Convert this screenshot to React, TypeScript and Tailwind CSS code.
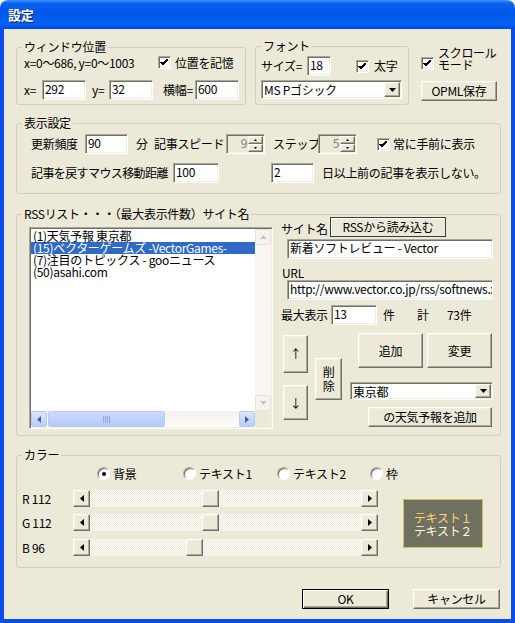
import React from 'react';

const font = { fontFamily: '"Noto Sans CJK JP", "Liberation Sans", sans-serif' };

const sunken =
  'border border-t-[#aca899] border-l-[#aca899] border-r-white border-b-white shadow-[inset_1px_1px_0_#716f64,inset_-1px_-1px_0_#f1efe2]';
const raised =
  'border border-t-white border-l-white border-r-[#716f64] border-b-[#716f64] shadow-[inset_-1px_-1px_0_#aca899,inset_1px_1px_0_#f1efe2] bg-[#ece9d8]';

const Field: React.FC<{ w: string; value: string }> = ({ w, value }) => (
  <div className={`h-[20px] ${w} ${sunken} bg-white pl-[2px] text-[12px] leading-[15px] text-black overflow-hidden whitespace-nowrap shrink-0`}>
    {value}
  </div>
);

const Check: React.FC<{ className?: string }> = ({ className = '' }) => (
  <div className={`w-[13px] h-[13px] bg-white ${sunken} flex items-center justify-center shrink-0 ${className}`}>
    <svg width="9" height="9" viewBox="0 0 9 9" shapeRendering="crispEdges">
      <polyline points="1,4 3,6.5 7.5,1.5" fill="none" stroke="#000" strokeWidth="2" />
    </svg>
  </div>
);

const Radio: React.FC<{ on?: boolean }> = ({ on }) => (
  <div className="w-[13px] h-[13px] rounded-full bg-white border border-t-[#aca899] border-l-[#aca899] border-r-white border-b-white shadow-[inset_1px_1px_0_#716f64] flex items-center justify-center shrink-0">
    {on && <div className="w-[4px] h-[4px] rounded-full bg-black" />}
  </div>
);

const Btn: React.FC<{ className: string; children: React.ReactNode }> = ({ className, children }) => (
  <div className={`${raised} flex items-center justify-center text-[12px] leading-[14px] text-black shrink-0 ${className}`}>
    {children}
  </div>
);

const Tri: React.FC<{ dir: 'up' | 'down' | 'left' | 'right'; color?: string; size?: number }> = ({ dir, color = '#000', size = 4 }) => {
  const s = size;
  const pts =
    dir === 'down'
      ? `0,0 ${s * 2 - 1},0 ${s - 0.5},${s}`
      : dir === 'up'
      ? `0,${s} ${s * 2 - 1},${s} ${s - 0.5},0`
      : dir === 'left'
      ? `${s},0 ${s},${s * 2 - 1} 0,${s - 0.5}`
      : `0,0 0,${s * 2 - 1} ${s},${s - 0.5}`;
  const w = dir === 'up' || dir === 'down' ? s * 2 - 1 : s;
  const h = dir === 'up' || dir === 'down' ? s : s * 2 - 1;
  return (
    <svg width={w} height={h} viewBox={`0 0 ${w} ${h}`}>
      <polygon points={pts} fill={color} />
    </svg>
  );
};

const Combo: React.FC<{ w: string; h: string; value: string }> = ({ w, h, value }) => (
  <div className={`${w} ${h} ${sunken} bg-white flex items-stretch shrink-0`}>
    <div className="flex-1 pl-[2px] text-[12px] leading-[15px] pt-[1px] text-black whitespace-nowrap">{value}</div>
    <div className={`w-[16px] m-[1px] ${raised} flex items-center justify-center`}>
      <Tri dir="down" />
    </div>
  </div>
);

const Spin: React.FC<{ value: string }> = ({ value }) => (
  <div className={`w-[39px] h-[20px] ${sunken} bg-[#ece9d8] flex items-stretch shrink-0`}>
    <div className="flex-1 text-right pr-[1px] text-[12px] leading-[16px] text-[#808080]">{value}</div>
    <div className="w-[15px] flex flex-col my-[1px] mr-[1px]">
      <div className={`flex-1 ${raised} flex items-center justify-center`}>
        <Tri dir="up" size={2} />
      </div>
      <div className={`flex-1 ${raised} flex items-center justify-center`}>
        <Tri dir="down" size={2} />
      </div>
    </div>
  </div>
);

const Group: React.FC<{ label: string; className: string; children: React.ReactNode }> = ({ label, className, children }) => (
  <fieldset className={`border border-[#d0d0bf] rounded-[3px] shrink-0 ${className}`}>
    <legend className="ml-[5px] px-[2px] text-[12px] leading-[14px] text-black">{label}</legend>
    {children}
  </fieldset>
);

const ColorBar: React.FC<{ label: string; value: number }> = ({ label, value }) => (
  <div className="flex items-center h-[17px]">
    <div className="w-[51px] text-[12px] leading-[14px]">{label}</div>
    <div className="w-[305px] h-[17px] flex">
      <div className={`w-[17px] h-[17px] ${raised} flex items-center justify-center`}>
        <Tri dir="left" />
      </div>
      <div className="flex-1 flex bg-[repeating-conic-gradient(#ffffff_0_25%,#ece9d8_0_50%)] bg-[length:2px_2px]">
        <div style={{ width: value }} />
        <div className={`w-[17px] h-[17px] ${raised}`} />
      </div>
      <div className={`w-[17px] h-[17px] ${raised} flex items-center justify-center`}>
        <Tri dir="right" />
      </div>
    </div>
  </div>
);

const items = ['(1)天気予報 東京都', '(15)ベクターゲームズ -VectorGames-', '(7)注目のトピックス - gooニュース', '(50)asahi.com'];

export default function App() {
  return (
    <div className="w-[515px] h-[623px] flex flex-col text-black tracking-[-0.3px]" style={font}>
      <div className="h-[29px] rounded-t-[8px] bg-[linear-gradient(to_bottom,#3d95ff_0%,#0a62f0_12%,#0058e8_45%,#0660f2_85%,#0048d8_100%)] flex items-center pl-[8px] shrink-0">
        <span className="text-white font-bold text-[13px] [text-shadow:1px_1px_0_#0a1e6e]">設定</span>
      </div>
      <div className="flex-1 border-x-[4px] border-b-[4px] border-[#0a4fe2] bg-[#ece9d8] flex flex-col pl-[12px] pt-[10px]">
        {/* top row */}
        <div className="flex items-start">
          <Group label="ウィンドウ位置" className="w-[230px] h-[65px] mt-[1px]">
            <div className="flex items-center h-[15px] mt-[1px] pl-[7px] text-[12px]">
              <span className="w-[134px] shrink-0 leading-[14px]">x=0〜686, y=0〜1003</span>
              <Check />
              <span className="ml-[4px] leading-[14px]">位置を記憶</span>
            </div>
            <div className="flex items-center h-[20px] mt-[10px] pl-[7px] text-[12px]">
              <span className="w-[18px] shrink-0">x=</span>
              <Field w="w-[44px]" value="292" />
              <span className="ml-[6px] w-[17px] shrink-0">y=</span>
              <Field w="w-[44px]" value="32" />
              <span className="ml-[10px] w-[32px] shrink-0">横幅=</span>
              <Field w="w-[44px]" value="600" />
            </div>
          </Group>
          <Group label="フォント" className="w-[154px] h-[66px] ml-[9px]">
            <div className="flex items-center h-[20px] mt-[3px] pl-[5px] text-[12px]">
              <span className="w-[46px] shrink-0">サイズ=</span>
              <Field w="w-[24px]" value="18" />
              <Check className="ml-[25px]" />
              <span className="ml-[5px]">太字</span>
            </div>
            <div className="mt-[4px] pl-[5px]">
              <Combo w="w-[141px]" h="h-[19px]" value="MS Pゴシック" />
            </div>
          </Group>
          <div className="ml-[12px] w-[77px] flex flex-col">
            <div className="flex items-start mt-[8px]">
              <Check className="mt-[10px]" />
              <div className="ml-[4px] text-[12px] leading-[12px]">
                スクロール
                <br />
                モード
              </div>
            </div>
            <Btn className="w-[76px] h-[20px] mt-[10px]">OPML保存</Btn>
          </div>
        </div>

        {/* 表示設定 */}
        <Group label="表示設定" className="w-[485px] h-[78px] mt-[11px]">
          <div className="flex items-center h-[20px] mt-[4px] pl-[14px] text-[12px] whitespace-nowrap">
            <span className="w-[54px] shrink-0">更新頻度</span>
            <Field w="w-[43px]" value="90" />
            <span className="ml-[8px] w-[18px] shrink-0">分</span>
            <span className="w-[72px] shrink-0">記事スピード</span>
            <Spin value="9" />
            <span className="ml-[8px] w-[45px] shrink-0">ステップ</span>
            <Spin value="5" />
            <Check className="ml-[20px]" />
            <span className="ml-[3px]">常に手前に表示</span>
          </div>
          <div className="flex items-center h-[20px] mt-[9px] pl-[14px] text-[12px] whitespace-nowrap">
            <span className="w-[142px] shrink-0 tracking-[-0.6px]">記事を戻すマウス移動距離</span>
            <Field w="w-[46px]" value="100" />
            <div className="w-[52px] shrink-0" />
            <Field w="w-[43px]" value="2" />
            <span className="ml-[8px]">日以上前の記事を表示しない。</span>
          </div>
        </Group>

        {/* RSS list */}
        <Group label="RSSリスト・・・（最大表示件数）サイト名" className="w-[485px] h-[229px] mt-[13px]">
          <div className="flex items-start">
            <div className={`ml-[12px] mt-[6px] w-[244px] h-[202px] ${sunken} bg-white flex flex-col p-[1px]`}>
              <div className="flex-1 flex">
                <div className="flex-1 text-[12px] leading-[12px] whitespace-nowrap overflow-hidden pt-[1px]">
                  {items.map((it, i) => (
                    <div key={it} className={`pl-[2px] h-[12px] ${i === 1 ? 'bg-[#316ac5] text-white' : ''}`}>
                      {it}
                    </div>
                  ))}
                </div>
                <div className="w-[16px] bg-[#f7f6f1] flex flex-col justify-between">
                  <div className="h-[16px] rounded-[2px] border border-[#e3e2dc] bg-[#f4f3ee] flex items-center justify-center">
                    <Tri dir="up" color="#c9c7ba" size={4} />
                  </div>
                  <div className="h-[16px] rounded-[2px] border border-[#e3e2dc] bg-[#f4f3ee] flex items-center justify-center">
                    <Tri dir="down" color="#c9c7ba" size={4} />
                  </div>
                </div>
              </div>
              <div className="h-[16px] flex">
                <div className="flex-1 flex bg-[linear-gradient(to_bottom,#f3f1ec,#fefefb)]">
                  <div className="w-[16px] rounded-[2px] border border-[#b8cbf4] bg-[linear-gradient(to_bottom,#dce6fd,#b9cdfb)] flex items-center justify-center">
                    <Tri dir="left" color="#4d6185" size={4} />
                  </div>
                  <div className="w-[117px] ml-[1px] rounded-[2px] border border-[#b8cbf4] bg-[linear-gradient(to_bottom,#cbdafd,#b6c9f8)] flex items-center justify-center gap-[1px]">
                    {[0, 1, 2, 3].map((k) => (
                      <div key={k} className="w-[1px] h-[7px] bg-[#8fa8e4]" />
                    ))}
                  </div>
                  <div className="flex-1" />
                  <div className="w-[16px] rounded-[2px] border border-[#b8cbf4] bg-[linear-gradient(to_bottom,#dce6fd,#b9cdfb)] flex items-center justify-center">
                    <Tri dir="right" color="#4d6185" size={4} />
                  </div>
                </div>
                <div className="w-[16px] bg-[#ece9d8]" />
              </div>
            </div>

            <div className="ml-[8px] w-[212px] flex flex-col text-[12px]">
              <div className="flex items-center h-[20px] -mt-[4px]">
                <span className="w-[49px] shrink-0 pt-[3px]">サイト名</span>
                <div className="w-[116px] h-[20px] border border-[#3c3c3c] shadow-[inset_1px_1px_0_#fff] flex items-center justify-center leading-[14px]">
                  RSSから読み込む
                </div>
              </div>
              <div className="mt-[2px] ml-[6px]">
                <Field w="w-[206px]" value="新着ソフトレビュー - Vector" />
              </div>
              <div className="mt-[7px] h-[14px] leading-[14px] pl-[1px]">URL</div>
              <div className="ml-[6px]">
                <Field w="w-[206px]" value="http://www.vector.co.jp/rss/softnews.xml" />
              </div>
              <div className="flex items-center h-[20px] mt-[5px] whitespace-nowrap">
                <span className="w-[50px] shrink-0">最大表示</span>
                <Field w="w-[46px]" value="13" />
                <span className="ml-[6px] w-[34px] shrink-0">件</span>
                <span className="w-[30px] shrink-0">計</span>
                <span>73件</span>
              </div>
              <div className="flex items-start mt-[8px]">
                <div className="ml-[2px] flex flex-col">
                  <Btn className="w-[25px] h-[38px] mt-[2px]">↑</Btn>
                  <Btn className="w-[25px] h-[35px] mt-[12px]">↓</Btn>
                </div>
                <Btn className="w-[27px] h-[42px] ml-[7px] mt-[25px] leading-[13px] text-center">
                  削<br />除
                </Btn>
                <div className="ml-[8px] w-[143px] flex flex-col">
                  <div className="flex">
                    <Btn className="w-[65px] h-[35px] ml-[8px]">追加</Btn>
                    <Btn className="w-[65px] h-[35px] ml-[4px]">変更</Btn>
                  </div>
                  <div className="mt-[14px]">
                    <Combo w="w-[143px]" h="h-[18px]" value="東京都" />
                  </div>
                  <Btn className="w-[124px] h-[20px] mt-[7px] ml-auto mr-[1px]">の天気予報を追加</Btn>
                </div>
              </div>
            </div>
          </div>
        </Group>

        {/* カラー */}
        <Group label="カラー" className="w-[485px] h-[120px] mt-[12px]">
          <div className="flex items-center h-[13px] mt-[5px] pl-[80px] text-[12px] leading-[14px] whitespace-nowrap">
            <div className="w-[86px] flex items-center shrink-0">
              <Radio on />
              <span className="ml-[3px]">背景</span>
            </div>
            <div className="w-[94px] flex items-center shrink-0">
              <Radio />
              <span className="ml-[3px]">テキスト1</span>
            </div>
            <div className="w-[93px] flex items-center shrink-0">
              <Radio />
              <span className="ml-[3px]">テキスト2</span>
            </div>
            <div className="flex items-center">
              <Radio />
              <span className="ml-[3px]">枠</span>
            </div>
          </div>
          <div className="flex items-start mt-[10px] pl-[5px]">
            <div className="flex flex-col gap-[7px]">
              <ColorBar label="R 112" value={112} />
              <ColorBar label="G 112" value={112} />
              <div className="mt-[1px]">
                <ColorBar label="B 96" value={96} />
              </div>
            </div>
            <div className="ml-[25px] mt-[9px] w-[80px] h-[49px] bg-[#707060] border border-[#c8c45a] flex flex-col items-center justify-center text-[12px] leading-[13px]">
              <span className="text-[#ffd070]">テキスト１</span>
              <span className="text-[#fff6d6]">テキスト２</span>
            </div>
          </div>
        </Group>

        <div className="flex justify-end gap-[24px] pr-[11px] mt-[21px]">
          <Btn className="w-[87px] h-[20px] !border-black shadow-[inset_1px_1px_0_#fff,inset_-1px_-1px_0_#716f64,inset_-2px_-2px_0_#aca899]">OK</Btn>
          <Btn className="w-[87px] h-[20px]">キャンセル</Btn>
        </div>
      </div>
    </div>
  );
}
